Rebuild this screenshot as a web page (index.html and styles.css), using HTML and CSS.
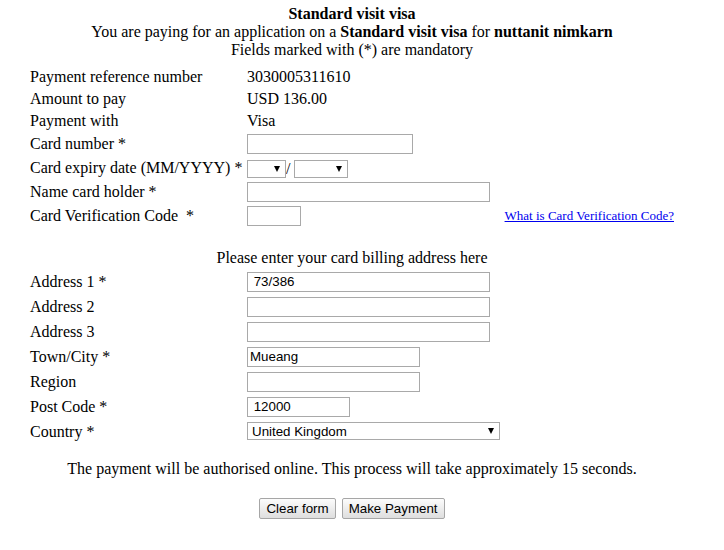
FILE: index.html
```html
<!DOCTYPE html>
<html lang="en">
<head>
    <meta charset="UTF-8">
    <title>Card Payment</title>
    <link rel="stylesheet" href="styles.css">
</head>
<body>

<div class="page">
    <div class="intro">
        <div><b>Standard visit visa</b></div>
        <div>You are paying for an application on a <b>Standard visit visa</b> for <b>nuttanit nimkarn</b></div>
        <div>Fields marked with (*) are mandatory</div>
    </div>

    <form class="pay-form" onsubmit="return false;">
        <table class="pay-table">
            <tr class="text-row">
                <td class="label">Payment reference number</td>
                <td>3030005311610</td>
                <td></td>
            </tr>
            <tr class="text-row">
                <td class="label">Amount to pay</td>
                <td>USD 136.00</td>
                <td></td>
            </tr>
            <tr class="text-row">
                <td class="label">Payment with</td>
                <td>Visa</td>
                <td></td>
            </tr>
            <tr class="field-row">
                <td class="label">Card number *</td>
                <td><input type="text" class="w-card"></td>
                <td></td>
            </tr>
            <tr class="field-row">
                <td class="label">Card expiry date (MM/YYYY) *</td>
                <td class="expiry">
                    <span class="select-wrap w-month"><select><option></option></select></span><span class="slash">/</span><span class="select-wrap w-year"><select><option></option></select></span>
                </td>
                <td></td>
            </tr>
            <tr class="field-row">
                <td class="label">Name card holder *</td>
                <td><input type="text" class="w-long"></td>
                <td></td>
            </tr>
            <tr class="field-row">
                <td class="label">Card Verification Code &nbsp;*</td>
                <td><input type="text" class="w-cvc"></td>
                <td class="help"><a href="#">What is Card Verification Code?</a></td>
            </tr>
            <tr class="spacer-row"><td colspan="3"></td></tr>
            <tr class="heading-row">
                <td colspan="3">Please enter your card billing address here</td>
            </tr>
            <tr class="addr-row">
                <td class="label">Address 1 *</td>
                <td><input type="text" class="w-long" value=" 73/386"></td>
                <td></td>
            </tr>
            <tr class="addr-row">
                <td class="label">Address 2</td>
                <td><input type="text" class="w-long"></td>
                <td></td>
            </tr>
            <tr class="addr-row">
                <td class="label">Address 3</td>
                <td><input type="text" class="w-long"></td>
                <td></td>
            </tr>
            <tr class="addr-row">
                <td class="label">Town/City *</td>
                <td><input type="text" class="w-town" value="Mueang"></td>
                <td></td>
            </tr>
            <tr class="addr-row">
                <td class="label">Region</td>
                <td><input type="text" class="w-town"></td>
                <td></td>
            </tr>
            <tr class="addr-row">
                <td class="label">Post Code *</td>
                <td><input type="text" class="w-post" value=" 12000"></td>
                <td></td>
            </tr>
            <tr class="addr-row">
                <td class="label">Country *</td>
                <td colspan="2">
                    <span class="select-wrap w-country"><select><option>United Kingdom</option><option>Thailand</option></select></span>
                </td>
            </tr>
        </table>

        <p class="notice">The payment will be authorised online. This process will take approximately 15 seconds.</p>

        <div class="actions">
            <button type="reset">Clear form</button>
            <button type="submit">Make Payment</button>
        </div>
    </form>
</div>

</body>
</html>
```

FILE: styles.css
```css
body {
    margin: 0;
    padding: 0;
    background-color: #fff;
    color: #000;
    font-family: "Liberation Serif", "Times New Roman", serif;
    font-size: 16px;
    line-height: 18px;
}
.page {
    width: 644px;
    margin-left: 30px;
    padding-top: 5px;
}
.intro {
    text-align: center;
}
.pay-form {
    margin: 7px 0 0 0;
}
.pay-table {
    width: 100%;
    border-collapse: collapse;
}
.pay-table td {
    padding: 0;
    vertical-align: middle;
    white-space: nowrap;
}
.pay-table td.label {
    width: 217px;
}
.text-row td {
    height: 22px;
}
.field-row td {
    height: 24px;
}
.addr-row td {
    height: 25px;
}
.spacer-row td {
    height: 19px;
}
.heading-row td {
    height: 22px;
    text-align: center;
}
.help {
    text-align: right;
    font-size: 13px;
}
.help a {
    color: #0000ee;
}
input[type="text"] {
    box-sizing: border-box;
    height: 20px;
    margin: 0;
    padding: 1px 2px;
    border: 1px solid #a9a9a9;
    font-family: "Liberation Sans", Arial, sans-serif;
    font-size: 13.33px;
    color: #000;
    vertical-align: middle;
}
.w-card { width: 166px; }
.w-long { width: 243px; }
.w-cvc { width: 54px; }
.w-town { width: 173px; }
.w-post { width: 103px; }

.expiry {
    font-size: 16px;
}
.select-wrap {
    position: relative;
    display: inline-block;
    vertical-align: middle;
    height: 18px;
}
.select-wrap select {
    -webkit-appearance: none;
    appearance: none;
    box-sizing: border-box;
    width: 100%;
    height: 18px;
    margin: 0;
    padding: 0 16px 0 4px;
    border: 1px solid #a9a9a9;
    border-radius: 0;
    background-color: #fff;
    font-family: "Liberation Sans", Arial, sans-serif;
    font-size: 13.33px;
    color: #000;
}
.select-wrap::after {
    content: "";
    position: absolute;
    right: 6px;
    top: 6px;
    border-left: 3px solid transparent;
    border-right: 3px solid transparent;
    border-top: 6px solid #000;
    pointer-events: none;
}
.w-month { width: 39px; }
.w-year { width: 54px; }
.w-country {
    width: 253px;
    margin-bottom: 2px;
}
.slash {
    display: inline-block;
    vertical-align: middle;
    width: 8px;
}
.notice {
    margin: 16px 0 0 0;
    text-align: center;
}
.actions {
    margin-top: 20px;
    text-align: center;
    font-size: 0;
}
.actions button {
    box-sizing: border-box;
    height: 21px;
    margin: 0 3px;
    padding: 0 6px;
    border: 1px solid #a6a6a6;
    border-radius: 2px;
    background: linear-gradient(#fcfcfc, #dedede);
    font-family: "Liberation Sans", Arial, sans-serif;
    font-size: 13.33px;
    color: #000;
}
```
